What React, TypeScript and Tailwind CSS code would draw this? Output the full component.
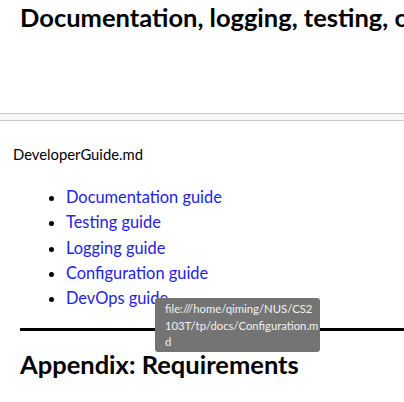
import React from 'react';

const links = [
  'Documentation guide',
  'Testing guide',
  'Logging guide',
  'Configuration guide',
  'DevOps guide',
];

const App: React.FC = () => {
  return (
    <div className="relative w-[404px] h-[402px] overflow-hidden bg-white text-black font-['Lato','Open_Sans',sans-serif]">
      <div className="h-[113px] pl-5 pt-[2px] overflow-hidden">
        <h2 className="text-[25.5px] leading-[30px] font-bold whitespace-nowrap">
          Documentation, logging, testing, configuration, dev-ops
        </h2>
      </div>
      <div className="h-[8px] border-y border-[#c6c6c6] bg-[#f6f6f6]" />

      <div className="pl-[13px] pt-[24px] text-[14.8px] leading-[18px]">DeveloperGuide.md</div>

      <ul className="mt-[21px] pl-[66px] list-disc text-[16.4px] leading-[25.3px] text-[#2222e6] marker:text-black">
        {links.map(name => (
          <li key={name}>
            <a className="cursor-pointer">{name}</a>
          </li>
        ))}
      </ul>

      <div className="ml-5 mt-[18px] h-[3px] bg-black" />

      <h2 className="pl-5 pt-[18px] text-[25.5px] leading-[30px] font-bold whitespace-nowrap">
        Appendix: Requirements
      </h2>

      <div className="absolute left-[155px] top-[298px] w-[165px] h-[54px] rounded-[3px] bg-[#747474] px-[10px] pt-[3px] text-[11.3px] leading-[16.5px] text-[#f2f2f2] whitespace-nowrap">
        file:///home/qiming/NUS/CS2
        <br />
        103T/tp/docs/Configuration.m
        <br />
        d
      </div>
    </div>
  );
};

export default App;
